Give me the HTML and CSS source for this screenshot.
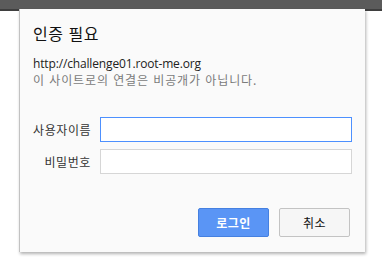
FILE: index.html
```html
<!DOCTYPE html>
<html lang="ko">
<head>
  <meta charset="UTF-8">
  <title>인증 필요</title>
  <link rel="stylesheet" href="styles.css">
</head>
<body>

<div class="topbar"></div>

<div class="dialog">
  <h1 class="dialog-title">인증 필요</h1>
  <div class="origin">
    <div class="origin-url">http://challenge01.root-me.org</div>
    <div class="origin-note">이 사이트로의 연결은 비공개가 아닙니다.</div>
  </div>

  <form class="login-form" onsubmit="return false">
    <div class="field">
      <label class="field-label" for="username">사용자이름</label>
      <input class="field-input focused" id="username" type="text">
    </div>
    <div class="field">
      <label class="field-label" for="password">비밀번호</label>
      <input class="field-input" id="password" type="password">
    </div>

    <div class="actions">
      <button class="btn btn-primary" type="submit">로그인</button>
      <button class="btn" type="button">취소</button>
    </div>
  </form>
</div>

</body>
</html>
```

FILE: styles.css
```css
:root {
  --blue: #5a95f5;
  --blue-border: #4580e0;
  --text: #222;
  --muted: #7a7a7a;
}

* {
  box-sizing: border-box;
}

body {
  margin: 0;
  background: #fff;
  font-family: "Open Sans", "Noto Sans CJK KR", sans-serif;
  color: var(--text);
  height: 271px;
  overflow: hidden;
}

.topbar {
  height: 11px;
  background: #5b5b5b;
  border-bottom: 2px solid #3f3f3f;
}

.dialog {
  margin: -2px 0 0 19px;
  width: 346px;
  height: 243px;
  padding: 14px 13px 15px 13px;
  background: #fafafa;
  border-left: 1px solid #c2c2c2;
  box-shadow: 1px 2px 3px rgba(0, 0, 0, 0.3);
  position: relative;
  display: flex;
  flex-direction: column;
}

.dialog-title {
  margin: 0;
  font-family: "Noto Sans CJK KR", sans-serif;
  font-size: 16px;
  font-weight: 400;
  line-height: 20px;
  letter-spacing: 0.5px;
  color: #111;
}

.origin {
  margin-top: 13px;
  font-size: 12px;
  line-height: 16px;
}

.origin-url {
  color: #222;
  letter-spacing: -0.15px;
}

.origin-note {
  color: var(--muted);
  font-family: "Noto Sans CJK KR", sans-serif;
  letter-spacing: 0.9px;
}

.login-form {
  margin-top: 29px;
  display: flex;
  flex-direction: column;
  gap: 7px;
  flex: 1;
}

.field {
  display: flex;
  align-items: center;
  gap: 9px;
}

.field-label {
  width: 58px;
  flex-shrink: 0;
  text-align: right;
  font-family: "Noto Sans CJK KR", sans-serif;
  font-size: 12px;
  letter-spacing: 0.6px;
  color: #333;
  white-space: nowrap;
}

.field-input {
  width: 252px;
  height: 25px;
  margin: 0;
  border: 1px solid #d6d6d6;
  background: #fff;
  outline: none;
}

.field-input.focused {
  border-color: #4d90fe;
}

.actions {
  margin-top: auto;
  display: flex;
  justify-content: flex-end;
  gap: 10px;
  padding-right: 2px;
}

.btn {
  width: 71px;
  height: 29px;
  border: 1px solid #c3c3c3;
  border-radius: 2px;
  background: #f6f6f6;
  font-family: "Noto Sans CJK KR", sans-serif;
  font-size: 12px;
  font-weight: 400;
  letter-spacing: 0.5px;
  color: #111;
  cursor: pointer;
}

.btn-primary {
  background: var(--blue);
  border-color: var(--blue-border);
  font-weight: 700;
  color: #fff;
}
```
